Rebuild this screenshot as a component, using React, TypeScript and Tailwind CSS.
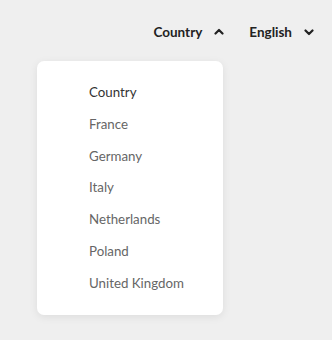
import React from "react";

const items = ["Country", "France", "Germany", "Italy", "Netherlands", "Poland", "United Kingdom"];

function ChevronUp() {
  return (
    <svg width="10" height="7" viewBox="0 0 10 7" fill="none">
      <path d="M1.5 5.5 L5 2 L8.5 5.5" stroke="#222" strokeWidth="2.2" strokeLinecap="round" strokeLinejoin="round" />
    </svg>
  );
}
function ChevronDown() {
  return (
    <svg width="10" height="7" viewBox="0 0 10 7" fill="none">
      <path d="M1.5 1.5 L5 5 L8.5 1.5" stroke="#222" strokeWidth="2.2" strokeLinecap="round" strokeLinejoin="round" />
    </svg>
  );
}

export default function App() {
  return (
    <div className="w-[332px] h-[340px] bg-[#efefef] relative" style={{ fontFamily: "Lato, 'Open Sans', sans-serif" }}>
      <div className="flex justify-end items-center pt-[23px] pr-[18px] h-[41px] text-[13.5px] font-bold text-[#222]">
        <div className="flex items-center">
          <span>Country</span>
          <span className="ml-[12px] mb-[1px]"><ChevronUp /></span>
        </div>
        <div className="flex items-center ml-[25px]">
          <span>English</span>
          <span className="ml-[12px]"><ChevronDown /></span>
        </div>
      </div>
      <div className="ml-[37px] mt-[20px] w-[186px] bg-white rounded-[7px] shadow-[0_2px_8px_rgba(0,0,0,0.08)] pt-[16px] pb-[15px]">
        {items.map((it, i) => (
          <div key={it} className={`h-[31.8px] flex items-center pl-[52px] text-[13.3px] ${i === 0 ? "text-[#333]" : "text-[#666]"}`}>
            {it}
          </div>
        ))}
      </div>
    </div>
  );
}
